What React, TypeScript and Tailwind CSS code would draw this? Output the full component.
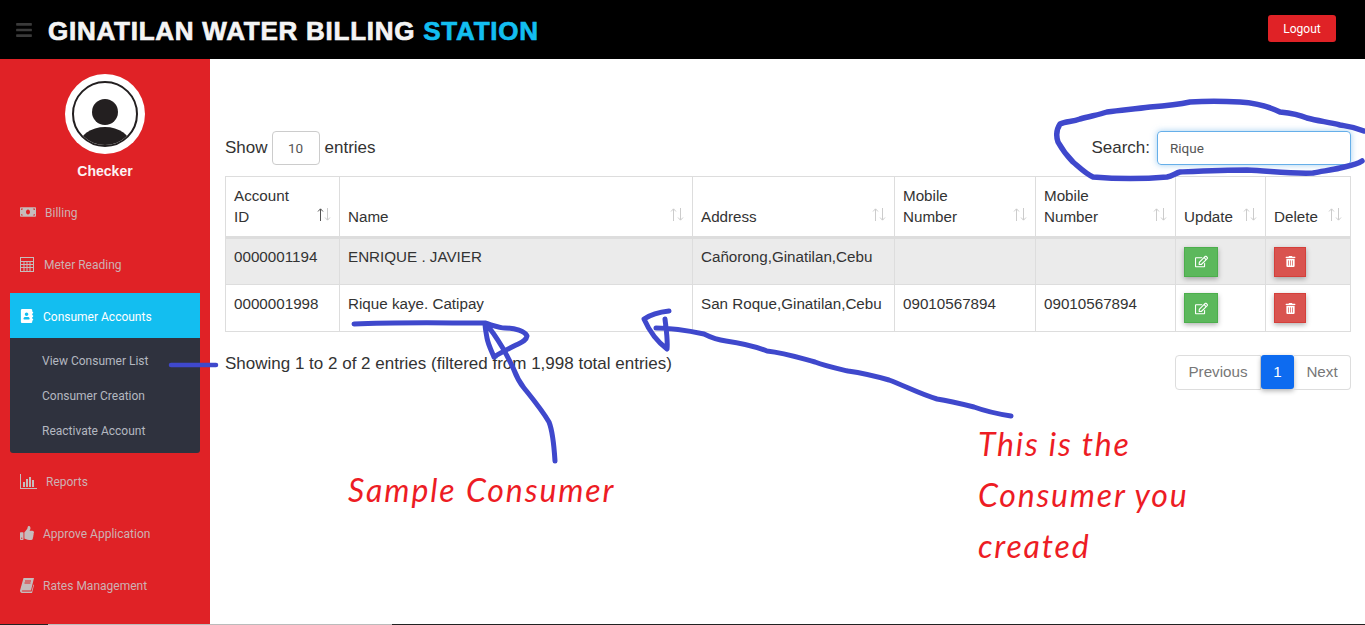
import React from 'react';
import {
  FaBars,
  FaMoneyBill,
  FaAddressBook,
  FaThumbsUp,
  FaRegEdit,
  FaTrashAlt,
} from 'react-icons/fa';

const columns = [
  { label: ['Account', 'ID'], width: 'w-[114px]', active: true },
  { label: ['Name'], width: 'w-[353px]' },
  { label: ['Address'], width: 'w-[202px]' },
  { label: ['Mobile', 'Number'], width: 'w-[141px]' },
  { label: ['Mobile', 'Number'], width: 'w-[140px]' },
  { label: ['Update'], width: 'w-[90px]' },
  { label: ['Delete'], width: 'w-[85px]' },
];

const rows = [
  { id: '0000001194', name: 'ENRIQUE . JAVIER', address: 'Cañorong,Ginatilan,Cebu', m1: '', m2: '', striped: true },
  { id: '0000001998', name: 'Rique kaye. Catipay', address: 'San Roque,Ginatilan,Cebu', m1: '09010567894', m2: '09010567894', striped: false },
];

function CalculatorIcon() {
  return (
    <svg width="14" height="15" viewBox="0 0 14 15" fill="none" stroke="currentColor">
      <rect x="0.5" y="0.5" width="13" height="14" />
      <path d="M0.5 4.5H13.5M0.5 7.5H13.5M0.5 10.5H13.5M4 4.5V14.5M7 4.5V14.5M10 4.5V14.5" />
    </svg>
  );
}

function ReportsIcon() {
  return (
    <svg width="17" height="15" viewBox="0 0 17 15" fill="currentColor">
      <path d="M0 0H1V14H17V15H0Z" />
      <rect x="3" y="8" width="2" height="5" />
      <rect x="6" y="5" width="2" height="8" />
      <rect x="9" y="3" width="2" height="10" />
      <rect x="12" y="6" width="2" height="7" />
    </svg>
  );
}

function BookIcon() {
  return (
    <svg width="14" height="15" viewBox="0 0 14 15" fill="currentColor">
      <path d="M3.5 0H14L11 12.5H2.4C1.6 12.5 1.3 13.6 2.4 13.6H11.6L13.4 6.5L14 7L12 15H2C0.6 15 -0.3 13.6 0.1 12.2Z" />
      <path d="M5 3H11M4.5 5H10.5" stroke="#e02226" strokeWidth="1" />
    </svg>
  );
}

function NavItem({ icon, label, gap }: { icon: React.ReactNode; label: string; gap: string }) {
  return (
    <div className={`h-[52px] pl-[20px] flex items-center text-[12px] text-[#cdb1b3] ${gap}`}>
      <span className="text-[#c6bcbc]">{icon}</span>
      <span className="pt-[2px]">{label}</span>
    </div>
  );
}

function SortIcon({ active }: { active?: boolean }) {
  return (
    <svg
      className="absolute right-[8px] bottom-[15px]"
      width="14"
      height="13"
      viewBox="0 0 14 13"
      fill="none"
      strokeWidth="1"
    >
      <path d="M3.5 13V1M1 3.5L3.5 0.8L6 3.5" stroke={active ? '#555' : '#ccc'} />
      <path d="M10.5 0V12M8 9.5L10.5 12.2L13 9.5" stroke="#ccc" />
    </svg>
  );
}

export default function App() {
  return (
    <div className="relative w-[1365px] h-[625px] overflow-hidden bg-white font-['Liberation_Sans',sans-serif] text-[#333]">
      {/* Top bar */}
      <header className="h-[59px] bg-black flex items-center justify-between pl-[15px] pr-[29px]">
        <div className="flex items-center gap-[15px]">
          <FaBars size={18} className="text-[#3a3a3a]" />
          <h1 className="mt-[3px] text-[26px] font-bold text-[#f4f4f4] tracking-[0.75px] [-webkit-text-stroke:0.7px]">
            GINATILAN WATER BILLING <span className="text-[#13bef0]">STATION</span>
          </h1>
        </div>
        <button className="-mt-[2px] w-[68px] h-[27px] rounded-[3px] bg-[#e02226] text-white text-[12px] font-['Roboto',sans-serif]">
          Logout
        </button>
      </header>

      <div className="flex h-[566px]">
        {/* Sidebar */}
        <aside className="w-[210px] shrink-0 bg-[#e02226] font-['Roboto',sans-serif]">
          <div className="pt-[15px] flex flex-col items-center h-[127px]">
            <div className="w-[80px] h-[80px] rounded-full bg-white flex items-center justify-center">
              <svg width="68" height="68" viewBox="0 0 68 68">
                <defs>
                  <clipPath id="avatarClip">
                    <circle cx="34" cy="34" r="31" />
                  </clipPath>
                </defs>
                <circle cx="34" cy="34" r="32" fill="none" stroke="#231f20" strokeWidth="2" />
                <circle cx="34" cy="32" r="13" fill="#231f20" />
                <ellipse cx="34" cy="66" rx="26" ry="19" fill="#231f20" clipPath="url(#avatarClip)" />
              </svg>
            </div>
            <div className="mt-[9px] text-[14px] font-bold leading-[16px] text-[#fbf3f3] font-['Liberation_Sans',sans-serif]">Checker</div>
          </div>

          <NavItem gap="gap-[9px]" label="Billing" icon={<FaMoneyBill size={16} />} />
          <NavItem gap="gap-[10px]" label="Meter Reading" icon={<CalculatorIcon />} />

          <div className="mx-[10px] mt-[3px] mb-[2px] rounded-b-[3px] overflow-hidden">
            <div className="h-[45px] bg-[#13bef0] pl-[10px] flex items-center gap-[9px] text-[12px] text-white">
              <FaAddressBook size={14} />
              <span className="pt-[2px]">Consumer Accounts</span>
            </div>
            <div className="h-[115px] bg-[#2f323e] pl-[32px] pt-[5px] text-[12px] text-[#b4b8c0]">
              <div className="h-[35px] flex items-center">View Consumer List</div>
              <div className="h-[35px] flex items-center">Consumer Creation</div>
              <div className="h-[35px] flex items-center">Reactivate Account</div>
            </div>
          </div>

          <NavItem gap="gap-[9px]" label="Reports" icon={<ReportsIcon />} />
          <NavItem gap="gap-[9px]" label="Approve Application" icon={<FaThumbsUp size={14} />} />
          <NavItem gap="gap-[9px]" label="Rates Management" icon={<BookIcon />} />
        </aside>

        {/* Content */}
        <main className="flex-1 pl-[15px] pr-[14px] pt-[72px] text-[17px]">
          <div className="h-[34px] flex items-center justify-between">
            <div className="flex items-center gap-[4px]">
              <span>Show</span>
              <div className="w-[48px] h-[34px] border border-[#ccc] rounded-[4px] flex items-center justify-center text-[13.5px] text-[#555] font-['Roboto',sans-serif]">
                10
              </div>
              <span className="ml-[1px]">entries</span>
            </div>
            <div className="flex items-center gap-[7px]">
              <span>Search:</span>
              <input
                readOnly
                value="Rique"
                className="w-[194px] h-[34px] px-[12px] border border-[#66afe9] rounded-[4px] text-[13.5px] text-[#555] font-['Roboto',sans-serif] outline-none shadow-[0_0_6px_rgba(102,175,233,0.6)]"
              />
            </div>
          </div>

          <table className="mt-[11px] w-[1125px] table-fixed border-collapse text-[15.2px] leading-[21px]">
            <thead>
              <tr className="h-[61px]">
                {columns.map((col, i) => (
                  <th
                    key={i}
                    className={`${col.width} relative border border-[#ddd] border-b-[3px] px-[8px] pb-[9px] align-bottom text-left font-normal`}
                  >
                    {col.label.map((line) => (
                      <div key={line}>{line}</div>
                    ))}
                    <SortIcon active={col.active} />
                  </th>
                ))}
              </tr>
            </thead>
            <tbody>
              {rows.map((row) => (
                <tr key={row.id} className={`h-[47px] ${row.striped ? 'bg-[#ebebeb]' : 'bg-white'}`}>
                  <td className="border border-[#ddd] px-[8px] pb-[10px] align-middle">{row.id}</td>
                  <td className="border border-[#ddd] px-[8px] pb-[10px] align-middle">{row.name}</td>
                  <td className="border border-[#ddd] px-[8px] pb-[10px] align-middle">{row.address}</td>
                  <td className="border border-[#ddd] px-[8px] pb-[10px] align-middle">{row.m1}</td>
                  <td className="border border-[#ddd] px-[8px] pb-[10px] align-middle">{row.m2}</td>
                  <td className="border border-[#ddd] px-[8px] align-middle">
                    <button className="w-[34px] h-[30px] flex items-center justify-center bg-[#5cb85c] border border-[#4cae4c] text-white shadow-[0_2px_5px_rgba(0,0,0,0.3)]">
                      <FaRegEdit size={13} />
                    </button>
                  </td>
                  <td className="border border-[#ddd] px-[8px] align-middle">
                    <button className="w-[32px] h-[30px] flex items-center justify-center bg-[#d9534f] border border-[#d43f3a] text-white shadow-[0_2px_5px_rgba(0,0,0,0.3)]">
                      <FaTrashAlt size={11} />
                    </button>
                  </td>
                </tr>
              ))}
            </tbody>
          </table>

          <div className="mt-[23px] flex items-start justify-between">
            <div className="leading-[18px]">Showing 1 to 2 of 2 entries (filtered from 1,998 total entries)</div>
            <div className="flex items-start text-[15.2px] text-[#777]">
              <div className="h-[35px] w-[86px] border border-[#ddd] rounded-l-[4px] flex items-center justify-center">Previous</div>
              <div className="h-[34px] w-[33px] bg-[#0d6bf0] rounded-[3px] text-white flex items-center justify-center shadow-[0_2px_5px_rgba(0,0,0,0.3)]">1</div>
              <div className="h-[35px] w-[57px] border border-[#ddd] border-l-0 rounded-r-[4px] flex items-center justify-center">Next</div>
            </div>
          </div>
        </main>
      </div>

      {/* Hand drawn annotations on top of the page */}
      <svg className="absolute inset-0 pointer-events-none" width="1365" height="625" fill="none" stroke="#3f48cc" strokeLinecap="round" strokeLinejoin="round">
        <path strokeWidth="5.5" d="M1364 131 C1352 126 1345 126 1340 125 C1328 122 1318 121 1307 118 C1298 114 1290 113 1280 112 C1268 106 1255 103 1240 102 C1222 101 1205 101 1190 102 C1176 105 1163 106 1150 107 C1135 109 1122 110 1107 112 C1098 115 1090 116 1080 119 C1072 122 1066 121 1060 124 C1056 130 1056 136 1058 142 C1063 151 1068 157 1073 162 C1080 168 1086 174 1093 177 C1118 179 1143 179 1167 177 C1172 176 1176 173 1180 172 C1203 171 1225 170 1247 170 C1270 171 1292 174 1313 173 C1323 171 1332 170 1340 168 C1348 166 1356 165 1362 161" />
        <path strokeWidth="4.5" d="M171 365 L216 365" />
        <path strokeWidth="5" d="M354 324 C396 322 442 323 485 323 C495 326 500 328 505 328 C515 328 525 331 527 336 C526 341 522 342 516 345 C508 349 500 353 494 357 C491 350 488 344 487 338 C486 332 485 328 485 323 C492 330 498 340 504 350 C508 358 511 363 514 370 C517 378 520 383 524 388 C532 398 542 410 549 422 C553 432 554 445 555 461" />
        <path strokeWidth="5" d="M669 311 C660 312 650 315 644 319 C648 328 655 340 667 349 C668 340 666 328 665 319 M656 328 C672 328 690 331 704 334 C712 338 718 340 726 341 C740 343 754 346 767 351 C785 353 800 358 815 362 C825 366 835 368 848 371 C862 373 875 376 889 380 C905 386 920 394 937 399 C950 401 962 404 974 407 C985 411 998 414 1011 416" />
      </svg>

      <div className="absolute left-[348px] top-[470px] text-[32px] leading-[40px] italic text-[#ed1c24] font-['Lato',sans-serif] tracking-[1.9px]">
        Sample Consumer
      </div>
      <div className="absolute left-[978px] top-[418px] text-[32px] leading-[51px] italic text-[#ed1c24] font-['Lato',sans-serif] tracking-[1.8px]">
        <div>This is the</div>
        <div>Consumer you</div>
        <div>created</div>
      </div>

      {/* Sliver of the window behind, along the bottom edge */}
      <div className="absolute left-0 right-0 bottom-0 h-px flex">
        <div className="w-[48px] bg-[#222]" />
        <div className="w-[344px] bg-[#bbb]" />
        <div className="flex-1 bg-[#222]" />
      </div>
    </div>
  );
}
